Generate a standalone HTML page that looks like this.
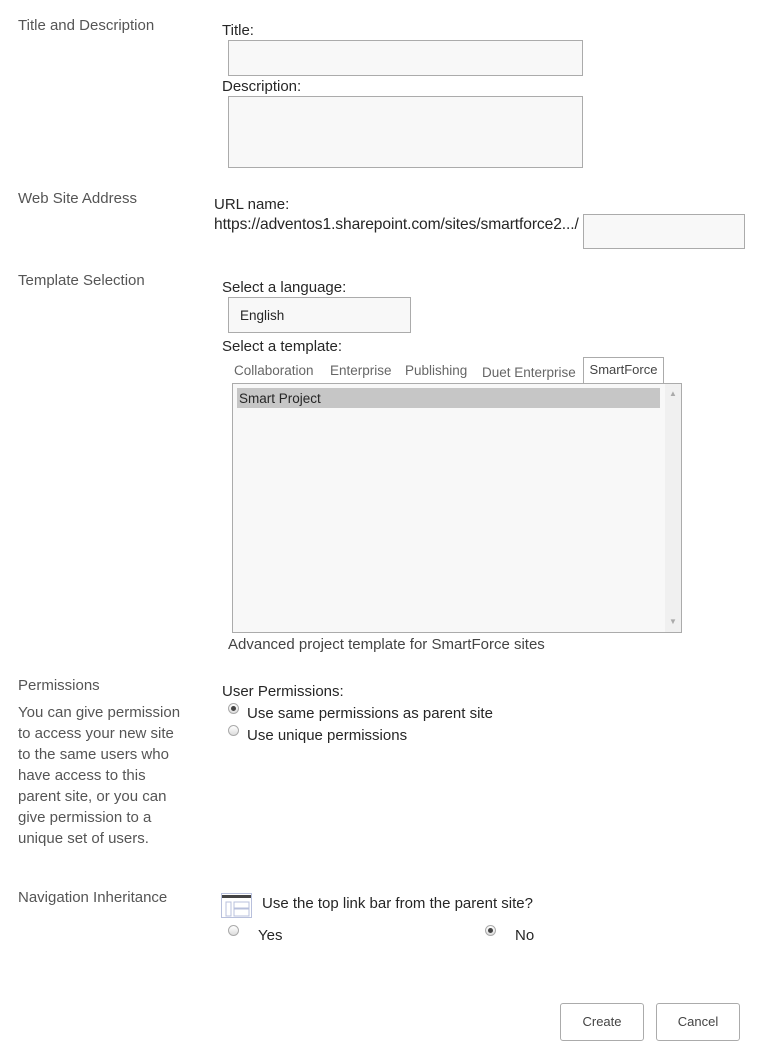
<!DOCTYPE html>
<html><head><meta charset="utf-8"><style>
body{margin:0;width:763px;height:1057px;background:#fff;font-family:"Liberation Sans",sans-serif;position:relative;overflow:hidden;color:#444}
.a{position:absolute;white-space:nowrap}
.h{font-size:15px;color:#555}
.l{font-size:15px;color:#262626}
.box{position:absolute;border:1px solid #ababab;background:#f8f8f8;box-sizing:border-box}
.rad{position:absolute;width:11px;height:11px;border-radius:50%;border:1px solid #aaa;background:linear-gradient(#fff,#ddd);box-sizing:border-box}
.btn{position:absolute;border:1px solid #ababab;border-radius:3px;background:#fff;font-size:13px;color:#444;text-align:center;box-sizing:border-box}
</style></head><body>
<div class="a h" style="left:18px;top:17px">Title and Description</div>
<div class="a l" style="left:222px;top:22px">Title:</div>
<div class="box" style="left:228px;top:40px;width:355px;height:36px"></div>
<div class="a l" style="left:222px;top:78px">Description:</div>
<div class="box" style="left:228px;top:96px;width:355px;height:72px"></div>

<div class="a h" style="left:18px;top:190px">Web Site Address</div>
<div class="a l" style="left:214px;top:196px">URL name:</div>
<div class="a l" style="left:214px;top:216px;font-size:15.6px;letter-spacing:-0.1px">https://adventos1.sharepoint.com/sites/smartforce2.../</div>
<div class="box" style="left:583px;top:214px;width:162px;height:35px"></div>

<div class="a h" style="left:18px;top:272px">Template Selection</div>
<div class="a l" style="left:222px;top:279px">Select a language:</div>
<div class="box" style="left:228px;top:297px;width:183px;height:36px"></div>
<div class="a l" style="left:240px;top:308px;font-size:13.5px">English</div>
<div class="a l" style="left:222px;top:338px">Select a template:</div>
<div class="a" style="left:234px;top:363px;font-size:13.5px;color:#666">Collaboration</div>
<div class="a" style="left:330px;top:363px;font-size:13.5px;color:#666">Enterprise</div>
<div class="a" style="left:405px;top:363px;font-size:13.5px;color:#666">Publishing</div>
<div class="a" style="left:482px;top:365px;font-size:13.5px;color:#666">Duet Enterprise</div>
<div class="a" style="left:583px;top:357px;width:81px;height:26px;border:1px solid #ababab;border-bottom:none;background:#fff;box-sizing:border-box;font-size:13px;color:#444;text-align:center;line-height:24px;z-index:2">SmartForce</div>
<div class="box" style="left:232px;top:383px;width:450px;height:250px;background:#f8f8f8"></div>
<div class="a" style="left:237px;top:388px;width:423px;height:20px;background:#c6c6c6"></div>
<div class="a l" style="left:239px;top:391px;font-size:13.5px">Smart Project</div>
<div class="a" style="left:665px;top:384px;width:16px;height:248px;background:#f0f0f0"></div>
<div class="a" style="left:669px;top:389px;font-size:8px;color:#aaa">▲</div>
<div class="a" style="left:669px;top:617px;font-size:8px;color:#aaa">▼</div>
<div class="a l" style="left:228px;top:636px;color:#444">Advanced project template for SmartForce sites</div>

<div class="a h" style="left:18px;top:677px">Permissions</div>
<div class="a h" style="left:18px;top:702px;line-height:21px;white-space:normal;width:190px">You can give permission<br>to access your new site<br>to the same users who<br>have access to this<br>parent site, or you can<br>give permission to a<br>unique set of users.</div>
<div class="a l" style="left:222px;top:683px">User Permissions:</div>
<div class="rad" style="left:228px;top:703px"><div style="position:absolute;left:2px;top:2px;width:5px;height:5px;border-radius:50%;background:#444"></div></div>
<div class="a l" style="left:247px;top:705px">Use same permissions as parent site</div>
<div class="rad" style="left:228px;top:725px"></div>
<div class="a l" style="left:247px;top:727px">Use unique permissions</div>

<div class="a h" style="left:18px;top:889px">Navigation Inheritance</div>
<svg class="a" style="left:221px;top:893px" width="31" height="25"><rect x="0.5" y="0.5" width="30" height="24" fill="#fff" stroke="#b8c0dc"/><rect x="1" y="2" width="29" height="3" fill="#444"/><rect x="5" y="9" width="5" height="14" fill="none" stroke="#b8c0dc"/><rect x="13" y="9" width="15" height="6" fill="none" stroke="#b8c0dc"/><rect x="13" y="16" width="15" height="7" fill="none" stroke="#b8c0dc"/></svg>
<div class="a l" style="left:262px;top:895px">Use the top link bar from the parent site?</div>
<div class="rad" style="left:228px;top:925px"></div>
<div class="a l" style="left:258px;top:927px">Yes</div>
<div class="rad" style="left:485px;top:925px"><div style="position:absolute;left:2px;top:2px;width:5px;height:5px;border-radius:50%;background:#444"></div></div>
<div class="a l" style="left:515px;top:927px">No</div>

<div class="btn" style="left:560px;top:1003px;width:84px;height:38px;line-height:36px">Create</div>
<div class="btn" style="left:656px;top:1003px;width:84px;height:38px;line-height:36px">Cancel</div>
</body></html>
